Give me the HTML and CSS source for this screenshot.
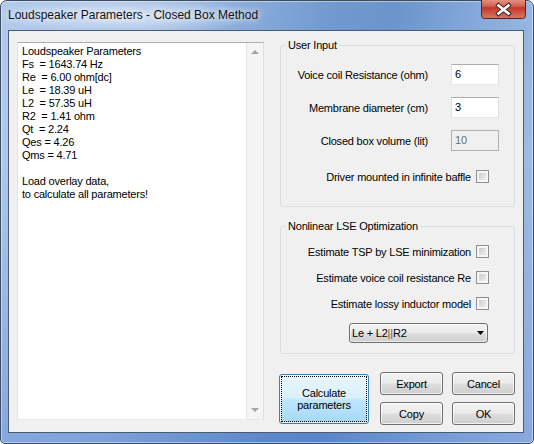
FILE: index.html
```html
<!DOCTYPE html>
<html>
<head>
<meta charset="utf-8">
<link rel="stylesheet" href="styles.css">
</head>
<body>
<div class="window">
  <div class="titlebar">
    <span class="title">Loudspeaker Parameters - Closed Box Method</span>
    <div class="close">
      <svg width="45" height="19" viewBox="0 0 45 19">
        <defs>
          <linearGradient id="cg" x1="0" y1="0" x2="0" y2="1">
            <stop offset="0" stop-color="#eab0a2"/>
            <stop offset="0.45" stop-color="#d5604f"/>
            <stop offset="0.52" stop-color="#c2372a"/>
            <stop offset="1" stop-color="#d67a66"/>
          </linearGradient>
        </defs>
        <rect x="0.5" y="-4" width="44" height="22.5" rx="3" fill="url(#cg)" stroke="#5a2219"/>
        <path d="M17.5 5.5 L27.5 13.5 M27.5 5.5 L17.5 13.5" stroke="#3d2a26" stroke-width="4.6" stroke-linecap="square" fill="none"/>
        <path d="M17.5 5.5 L27.5 13.5 M27.5 5.5 L17.5 13.5" stroke="#ffffff" stroke-width="2.6" stroke-linecap="square" fill="none"/>
      </svg>
    </div>
  </div>
  <div class="client">
    <div class="memo">
      <div class="memo-text">Loudspeaker Parameters
Fs  = 1643.74 Hz
Re  = 6.00 ohm[dc]
Le  = 18.39 uH
L2  = 57.35 uH
R2  = 1.41 ohm
Qt  = 2.24
Qes = 4.26
Qms = 4.71

Load overlay data,
to calculate all parameters!</div>
      <div class="vscroll">
        <span class="arrow-up"></span>
        <span class="arrow-down"></span>
      </div>
    </div>
    <div class="side">
      <div class="group g1">
        <span class="group-title">User Input</span>
        <div class="field">
          <span class="label">Voice coil Resistance (ohm)</span>
          <span class="edit">6</span>
        </div>
        <div class="field">
          <span class="label">Membrane diameter (cm)</span>
          <span class="edit">3</span>
        </div>
        <div class="field">
          <span class="label">Closed box volume (lit)</span>
          <span class="edit disabled">10</span>
        </div>
        <div class="check-row first-check">
          <span class="label">Driver mounted in infinite baffle</span>
          <span class="check"></span>
        </div>
      </div>
      <div class="group g2">
        <span class="group-title">Nonlinear LSE Optimization</span>
        <div class="check-row">
          <span class="label">Estimate TSP by LSE minimization</span>
          <span class="check"></span>
        </div>
        <div class="check-row">
          <span class="label">Estimate voice coil resistance Re</span>
          <span class="check"></span>
        </div>
        <div class="check-row">
          <span class="label">Estimate lossy inductor model</span>
          <span class="check"></span>
        </div>
        <div class="combo">
          <span class="combo-text">Le + L2<span class="bars">||</span>R2</span>
          <svg width="7" height="4" viewBox="0 0 7 4"><polygon points="0,0 7,0 3.5,4" fill="#000"/></svg>
        </div>
      </div>
      <div class="buttons">
        <button class="btn calc">Calculate<br>parameters</button>
        <div class="btn-grid">
          <button class="btn">Export</button>
          <button class="btn">Cancel</button>
          <button class="btn">Copy</button>
          <button class="btn">OK</button>
        </div>
      </div>
    </div>
  </div>
</div>
</body>
</html>
```
FILE: styles.css
```css
* { box-sizing: border-box; }
html, body { margin: 0; padding: 0; }
body {
  width: 534px;
  height: 444px;
  overflow: hidden;
  background: #ffffff;
  font-family: "Liberation Sans", Arial, sans-serif;
  font-size: 11px;
  letter-spacing: -0.2px;
  color: #000;
}
.window {
  width: 534px;
  height: 444px;
  border: 1px solid #3a4b62;
  border-radius: 7px 7px 5px 5px;
  padding: 0 9px 10px 7px;
  display: flex;
  flex-direction: column;
  background:
    radial-gradient(ellipse 170px 26px at 125px 15px, rgba(255,255,255,0.6), rgba(255,255,255,0) 75%),
    linear-gradient(180deg, rgba(255,255,255,0) 35%, rgba(40,95,195,0.28) 100%),
    linear-gradient(100deg, #b2cbeb 0%, #9cb9e2 30%, #7199cf 55%, #6b94cc 65%, #92b3df 85%, #adc6e9 100%);
  box-shadow: inset 0 0 0 1px rgba(255,255,255,0.45);
}
.titlebar {
  height: 29px;
  flex: none;
  display: flex;
  justify-content: space-between;
  align-items: flex-start;
}
.title {
  font-size: 12px;
  letter-spacing: 0;
  line-height: 15px;
  margin-top: 7px;
  color: #111;
  text-shadow: 0 0 6px rgba(255,255,255,0.9), 0 0 10px rgba(255,255,255,0.7);
}
.close {
  width: 45px;
  height: 19px;
  margin-top: -1px;
  margin-right: -2px;
}
.close svg { display: block; }
.client {
  height: 403px;
  flex: none;
  border: 1px solid #4a5c73;
  background: #f0f0f0;
  display: flex;
  align-items: flex-start;
  padding: 7px 0 0 8px;
}
.memo {
  margin-top: 4px;
  width: 247px;
  height: 378px;
  flex: none;
  display: flex;
  border: 1px solid;
  border-color: #abadb3 #dbdfe6 #e3e9ef #e2e3ea;
  background: #fff;
}
.memo-text {
  flex: 1;
  padding: 2px 4px;
  white-space: pre;
  line-height: 13px;
}
.vscroll {
  width: 17px;
  flex: none;
  background: #f4f4f4;
  border-left: 1px solid #e6e6e6;
  display: flex;
  flex-direction: column;
  justify-content: space-between;
  align-items: center;
  padding: 7px 0;
}
.arrow-up {
  width: 0; height: 0;
  border-left: 4px solid transparent;
  border-right: 4px solid transparent;
  border-bottom: 4px solid #a3a3a3;
}
.arrow-down {
  width: 0; height: 0;
  border-left: 4px solid transparent;
  border-right: 4px solid transparent;
  border-top: 4px solid #a3a3a3;
}
.side {
  margin-left: 16px;
  width: 235px;
  flex: none;
  display: flex;
  flex-direction: column;
}
.group {
  border: 1px solid #d5dfe5;
  border-radius: 3px;
  padding-right: 15px;
  display: flex;
  flex-direction: column;
}
.g1 { margin-top: 7px; height: 162px; }
.g2 { margin-top: 19px; height: 128px; }
.group-title {
  display: block;
  align-self: flex-start;
  margin: -7px 0 0 5px;
  padding: 0 2px;
  background: #f0f0f0;
  line-height: 13px;
}
.field {
  display: flex;
  justify-content: flex-end;
  align-items: center;
  gap: 23px;
  height: 21px;
  margin-top: 12px;
}
.label { white-space: nowrap; }
.edit {
  width: 48px;
  height: 21px;
  border: 1px solid;
  border-color: #abadb3 #dbdfe6 #e3e9ef #e2e3ea;
  background: #fff;
  padding: 0 3px;
  line-height: 18px;
}
.edit.disabled {
  background: #f0f0f0;
  border-color: #adb2b5;
  color: #6d6d6d;
}
.check-row {
  display: flex;
  justify-content: flex-end;
  align-items: center;
  gap: 5px;
  height: 13px;
  margin-top: 13px;
  margin-right: 10px;
}
.g1 .first-check { margin-top: 19px; }
.g2 .check-row:first-of-type { margin-top: 12px; }
.check {
  width: 13px;
  height: 13px;
  flex: none;
  border: 1px solid #8e8f8f;
  background: linear-gradient(135deg, #bfc3c9 0%, #dfe0e2 55%, #f6f6f6 100%);
  box-shadow: inset 0 0 0 2px #f6f6f6;
}
.combo {
  align-self: flex-end;
  margin-top: 13px;
  margin-right: 11px;
  width: 139px;
  height: 20px;
  border: 1px solid #707070;
  border-radius: 3px;
  background: linear-gradient(#f2f2f2 0%, #ebebeb 48%, #dddddd 52%, #cfcfcf 100%);
  box-shadow: inset 0 0 0 1px rgba(255,255,255,0.6);
  display: flex;
  align-items: center;
  justify-content: space-between;
  padding: 0 3px 0 2px;
}
.combo svg { display: block; }
.bars { color: #7a5410; }
.buttons {
  display: flex;
  margin-top: 18px;
  margin-left: -1px;
  gap: 11px;
}
.btn {
  font: inherit;
  letter-spacing: -0.2px;
  color: #000;
  padding: 0;
  margin: 0;
  border: 1px solid #707070;
  border-radius: 3px;
  background: linear-gradient(#f2f2f2 0%, #ebebeb 48%, #dddddd 52%, #cfcfcf 100%);
  box-shadow: inset 0 0 0 1px rgba(255,255,255,0.7);
  line-height: 12px;
}
.calc {
  width: 90px;
  height: 50px;
  align-self: center;
  border-color: #3c7fb1;
  background: linear-gradient(#eaf6fd 0%, #d9f0fc 48%, #bee6fd 52%, #a7d9f5 100%);
  outline: 1px dotted #000;
  outline-offset: -3px;
}
.btn-grid {
  display: grid;
  grid-template-columns: 63px 63px;
  grid-auto-rows: 23px;
  column-gap: 9px;
  row-gap: 7px;
}
```
